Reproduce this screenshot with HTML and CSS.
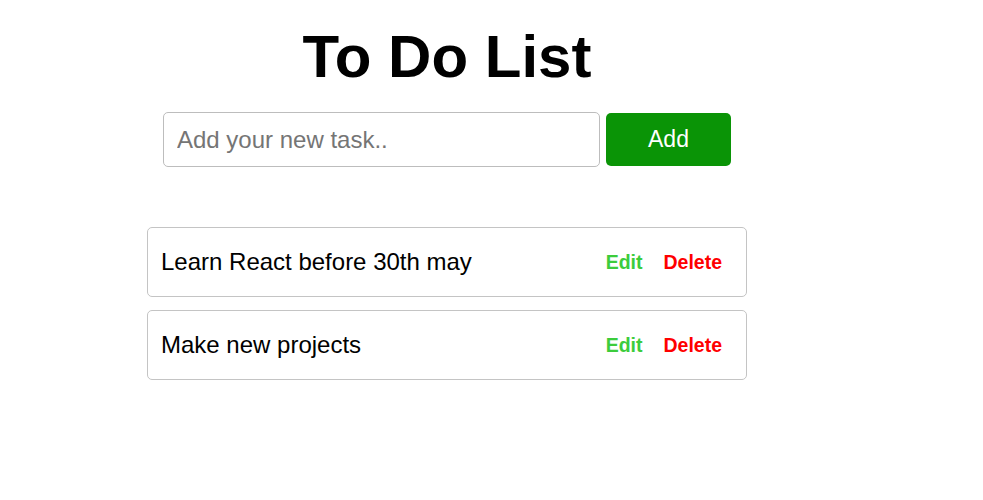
FILE: index.html
```html
<!DOCTYPE html>
<html>
<head>
<meta charset="utf-8">
<link rel="stylesheet" href="styles.css">
</head>
<body>
<div class="app">
  <h1 class="title">To Do List</h1>
  <div class="form">
    <input class="task-input" type="text" placeholder="Add your new task..">
    <button class="add-btn">Add</button>
  </div>
  <ul class="list">
    <li class="item">
      <span class="item-text">Learn React before 30th may</span>
      <span class="actions"><button class="edit">Edit</button><button class="delete">Delete</button></span>
    </li>
    <li class="item">
      <span class="item-text">Make new projects</span>
      <span class="actions"><button class="edit">Edit</button><button class="delete">Delete</button></span>
    </li>
  </ul>
</div>
</body>
</html>
```
FILE: styles.css
```css
* { box-sizing: border-box; }
body {
  margin: 0;
  background: #fff;
  font-family: "Liberation Sans", Arial, sans-serif;
  color: #000;
}
.app {
  width: 600px;
  margin-left: 147px;
  padding-top: 22px;
}
.title {
  margin: 0;
  text-align: center;
  font-size: 60px;
  font-weight: bold;
  line-height: 70px;
}
.form {
  display: flex;
  justify-content: center;
  align-items: center;
  gap: 6px;
  margin-top: 20px;
}
.task-input {
  width: 437px;
  height: 55px;
  border: 1px solid #bdbdbd;
  border-radius: 5px;
  padding: 0 13px;
  font-family: inherit;
  font-size: 24px;
  color: #000;
  outline: none;
}
.task-input::placeholder { color: #757575; }
.add-btn {
  width: 125px;
  height: 53px;
  border: none;
  border-radius: 5px;
  background: #0a9406;
  color: #fff;
  font-family: inherit;
  font-size: 23px;
}
.list {
  list-style: none;
  margin: 60px 0 0;
  padding: 0;
  display: flex;
  flex-direction: column;
  gap: 13px;
}
.item {
  height: 70px;
  border: 1px solid #c4c4c4;
  border-radius: 5px;
  display: flex;
  align-items: center;
  justify-content: space-between;
  padding: 0 24px 0 13px;
}
.item-text { font-size: 24px; }
.actions { display: flex; gap: 21px; }
.actions button {
  border: none;
  background: none;
  padding: 0;
  font-family: inherit;
  font-weight: bold;
  font-size: 19.5px;
}
.edit { color: #3ccc3c; }
.delete { color: #ff0000; }
```
